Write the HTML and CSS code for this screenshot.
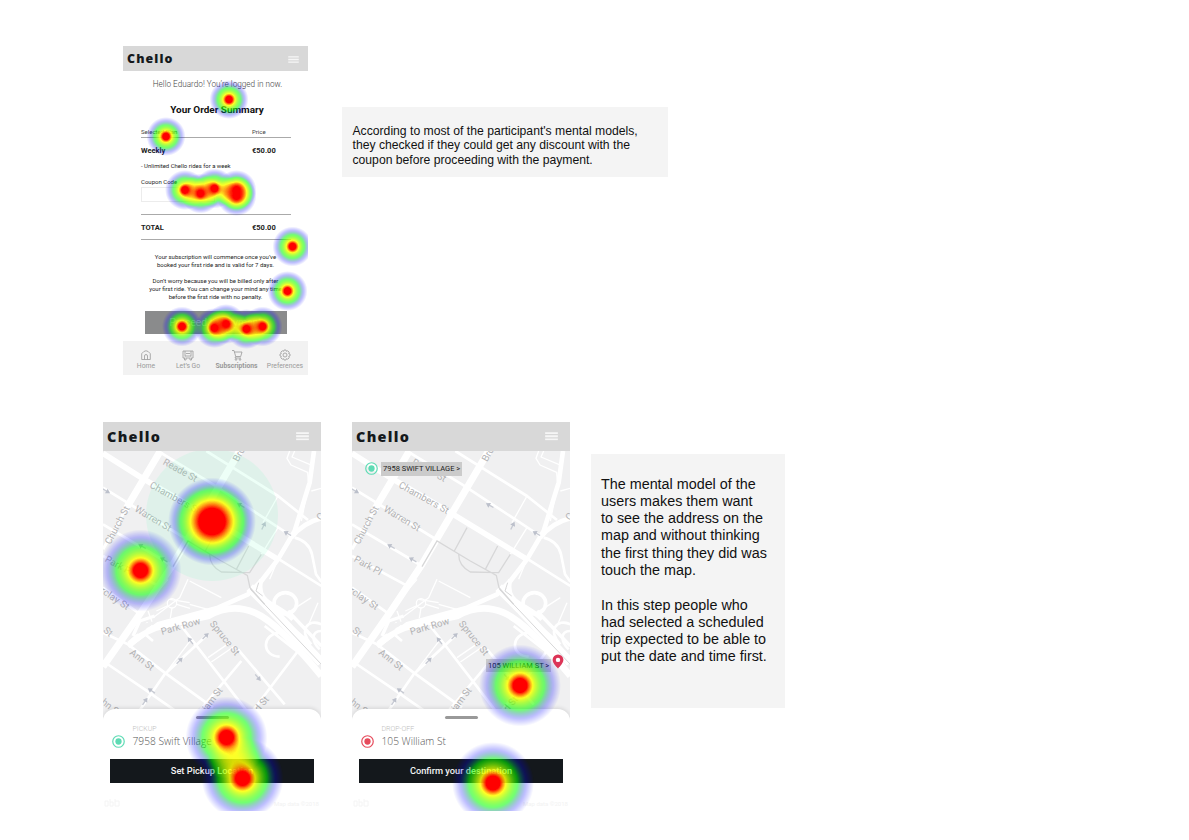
FILE: index.html
```html
<!DOCTYPE html>
<html lang="en">
<head>
<meta charset="utf-8">
<title>Chello heatmaps</title>
<link rel="stylesheet" href="styles.css">
</head>
<body>
<svg class="defs" width="0" height="0" aria-hidden="true">
  <defs>
    <!-- intensity (alpha) to colour ramp: blue, green, yellow, red -->
    <filter id="heat" x="0" y="0" width="1200" height="900" filterUnits="userSpaceOnUse" color-interpolation-filters="sRGB">
      <feColorMatrix in="SourceGraphic" type="matrix" values="0 0 0 1 0  0 0 0 1 0  0 0 0 1 0  0 0 0 0 1" result="level"/>
      <feComponentTransfer in="level" result="ramp">
        <feFuncR type="table" tableValues="0 0 0 0 0 0 0 0 0 0 0 0 .167 .333 .5 .667 .833 1 1 1 1"/>
        <feFuncG type="table" tableValues="0 0 0 0 0 0 .167 .333 .5 .667 .833 1 1 1 1 1 1 1 .667 .333 0"/>
        <feFuncB type="table" tableValues="1 1 1 1 1 1 .833 .667 .5 .333 .167 0 0 0 0 0 0 0 0 0 0"/>
      </feComponentTransfer>
      <feComposite in="ramp" in2="SourceGraphic" operator="in"/>
    </filter>
    <radialGradient id="spot"><stop offset=".17" stop-color="#000"/><stop offset=".6" stop-color="#000" stop-opacity="0.54"/><stop offset="1" stop-color="#000" stop-opacity="0"/></radialGradient>
    <radialGradient id="spotWide"><stop offset=".3" stop-color="#000"/><stop offset=".5" stop-color="#000" stop-opacity=".84"/><stop offset=".72" stop-color="#000" stop-opacity=".54"/><stop offset="1" stop-color="#000" stop-opacity="0"/></radialGradient>

    <symbol id="arrow" viewBox="-15 -9 30 18" overflow="visible">
      <path d="M-13 0H6" stroke="#c6c9d2" stroke-width="4" fill="none"/><path d="M0-8 13 0 0 8z" fill="#bcc0cb"/>
    </symbol>
    <symbol id="burger" viewBox="0 0 12 8">
      <path d="M0 1h12M0 4h12M0 7h12" stroke="#f6f6f6" stroke-width="1.7"/>
    </symbol>

    <symbol id="map" viewBox="15 105 654 800">
      <rect x="15" y="105" width="654" height="800" fill="#f0f0f1"/>
      <g fill="none" stroke="#fff" stroke-linejoin="round">
        <g stroke-width="4">
          <path d="M575 105l-8 22 12 20 50 22 2 25M590 105l-8 18 60 25M640 225l30-8M625 240l-15 75"/>
          <path d="M540 240l-45 80M490 415l50-80M330 725l70-48M340 738l70-48M150 560l60-70M270 490l-25 55-80 60M215 550l60 10M275 495l95 50M365 590l-90-25"/>
          <circle cx="222" cy="562" r="14"/><path d="M175 585l35-16M236 565l40 12M222 576l-5 30M150 585l12 32"/>
          <path d="M200 775l80-105M540 430l-25 60M640 545l-70 45M660 560l-30 70"/>
        </g>
        <g stroke-width="8">
          <path d="M325 105L540 240 630 312M590 365q42 10 52 50l12 60 16 22M540 428l130 82"/>
          <path d="M180 105L345 205 580 360M15 215L270 372M15 325L225 450M15 420L185 512"/>
          <path d="M15 515L120 590M15 735L140 820 240 890M250 630L450 890M430 735L300 890M600 705L460 890M420 700l140 165M150 620l-20 25 35 30"/>
          <path d="M330 655L200 775 120 890"/>
          <path d="M15 650l75 35 110 85 145 105"/>
          <path d="M670 625c-40-20-70 20-30 60M670 645c-30 0-30 30-5 55M545 650c-55 5-55 70 0 72M500 630l90 70 80 70M540 600l90 75"/>
        </g>
        <g stroke-width="14">
          <path d="M648 105L635 200 590 345 540 430 490 495 450 535 360 575 180 625 90 690"/>
          <path d="M580 365q35-45 90-58"/>
          <path d="M490 490q-15 50 30 75t65 45"/>
          <ellipse cx="562" cy="562" rx="34" ry="32" stroke-width="11"/>
          <path stroke-width="17" d="M15 112L130 185 310 290 540 430"/>
        </g>
        <path stroke-width="21" d="M187 105L80 285M425 105L310 300 225 445 125 595 15 752"/>
        <path stroke-width="9" d="M80 285L15 400"/>
        <path stroke-width="20" d="M95 685Q140 640 200 628L330 600Q400 560 470 590T670 780"/>
        <path stroke-width="28" d="M455 515L520 580 670 740"/>
        <path stroke-width="10" d="M570 585L670 690M105 660l20-45 45-15M165 630l-50 45"/>
      </g>
      <g fill="none" stroke="#d7d7d8" stroke-width="4">
        <path d="M225 452L270 375 370 435 448 478 456 515 500 565M360 335L322 405M490 415L455 470 370 468Q335 450 335 415M452 390L415 460"/>
        <path d="M457 520L670 745M482 500l-8 25 20 15" stroke-width="3"/>
      </g>
      <path d="M118 655l14-30 30-8-20 24z" fill="#f0f0f1"/>
      <g>
        <use href="#arrow" width="30" height="18" x="-15" y="-9" transform="translate(25 225) rotate(30)"/>
        <use href="#arrow" width="30" height="18" x="-15" y="-9" transform="translate(428 268) rotate(210)"/>
        <use href="#arrow" width="30" height="18" x="-15" y="-9" transform="translate(568 352) rotate(210)"/>
        <use href="#arrow" width="30" height="18" x="-15" y="-9" transform="translate(497 329) rotate(-64)"/>
        <use href="#arrow" width="30" height="18" x="-15" y="-9" transform="translate(132 391) rotate(210)"/>
        <use href="#arrow" width="30" height="18" x="-15" y="-9" transform="translate(197 431) rotate(210)"/>
        <use href="#arrow" width="30" height="18" x="-15" y="-9" transform="translate(277 674) rotate(232)"/>
        <use href="#arrow" width="30" height="18" x="-15" y="-9" transform="translate(323 660) rotate(-45)"/>
        <use href="#arrow" width="30" height="18" x="-15" y="-9" transform="translate(245 734) rotate(-45)"/>
        <use href="#arrow" width="30" height="18" x="-15" y="-9" transform="translate(160 824) rotate(214)"/>
        <use href="#arrow" width="30" height="18" x="-15" y="-9" transform="translate(141 856) rotate(-55)"/>
        <use href="#arrow" width="30" height="18" x="-15" y="-9" transform="translate(480 785) rotate(50)"/>
      </g>
      <g class="street">
        <text transform="translate(193 144) rotate(29)" textLength="112">Reade St</text>
        <text transform="translate(420 139) rotate(-60)">Broadway</text>
        <text transform="translate(153 213) rotate(29)" textLength="167">Chambers St</text>
        <text transform="translate(108 284) rotate(31)" textLength="122">Warren St</text>
        <text transform="translate(37 387) rotate(-62)" textLength="125">Church St</text>
        <text transform="translate(19 435) rotate(29)" textLength="90">Park Pl</text>
        <text transform="translate(5 528) rotate(34)" textLength="98">rclay St</text>
        <text transform="translate(192 657) rotate(-16)" textLength="122">Park Row</text>
        <text transform="translate(334 624) rotate(51)" textLength="124">Spruce St</text>
        <text transform="translate(93 713) rotate(38)" textLength="84">Ann St</text>
        <text transform="translate(14 646) rotate(40)">St</text>
        <text transform="translate(8 862) rotate(38)">hn St</text>
        <text transform="translate(327 887) rotate(-53)" textLength="80">iam St</text>
        <text transform="translate(482 889) rotate(-50)">d St</text>
        <text transform="translate(668 315) rotate(-50)">Centre</text>
      </g>
    </symbol>
  </defs>
</svg>

<main class="board">
  <section class="row row-top">
    <article class="phone phone-summary">
      <header class="bar"><span class="logo">Chello</span><svg class="burger"><use href="#burger"/></svg></header>
      <p class="hello">Hello Eduardo! You’re logged in now.</p>
      <h1 class="title">Your Order Summary</h1>
      <div class="order">
        <div class="line head"><span>Selected Plan</span><span class="price">Price</span></div>
        <div class="line strong"><span>Weekly</span><span class="price">€50.00</span></div>
        <p class="detail">- Unlimited Chello rides for a week</p>
        <p class="coupon">Coupon Code</p>
        <div class="field"></div>
        <div class="line strong total"><span>TOTAL</span><span class="price">€50.00</span></div>
      </div>
      <p class="terms">Your subscription will commence once you’ve<br>booked your first ride and is valid for 7 days.</p>
      <p class="terms terms-next">Don’t worry because you will be billed only after<br>your first ride. You can change your mind any time<br>before the first ride with no penalty.</p>
      <div class="proceed">Proceed to Payment</div>
      <nav class="tabs">
        <span class="tab"><svg viewBox="0 0 12 12"><path d="M1.700 10.500V4.700Q6-1.200 10.300 4.700v5.800zM4.500 10.500V7a1.500 1.500 0 0 1 3 0v3.500"/></svg>Home</span>
        <span class="tab"><svg viewBox="0 0 12 12"><path d="M1 2h10v7H9.500v2H8V9H4v2H2.500V9H1zM3 2v5h6V2M2.500 8h1M8.500 8h1M4 4.500h4"/></svg>Let’s Go</span>
        <span class="tab on"><svg viewBox="0 0 12 12"><path d="M1 1.500h2l1.700 6h5l1.300-4.500H3.500M4.700 7.500l-.7 1.500h6"/><circle cx="5" cy="10.500" r=".8"/><circle cx="9" cy="10.500" r=".8"/></svg>Subscriptions</span>
        <span class="tab"><svg viewBox="0 0 12 12"><path d="M5 1h2l.4 1.300 1.400-.5 1.400 1.400-.5 1.400L11 5v2l-1.300.4.5 1.400-1.400 1.400-1.400-.5L7 11H5l-.4-1.300-1.400.5-1.400-1.400.5-1.400L1 7V5l1.300-.4-.5-1.400 1.400-1.400 1.400.5z"/><circle cx="6" cy="6" r="2"/></svg>Preferences</span>
      </nav>
      <svg class="heat" viewBox="123 46 185 330">
        <g filter="url(#heat)" fill="url(#spot)">
          <circle cx="229" cy="99.500" r="19.500"/><circle cx="166" cy="136.500" r="19.500"/>
          <circle cx="185" cy="190" r="20"/><circle cx="200.500" cy="193.500" r="20"/><circle cx="214.500" cy="188.500" r="20"/><circle cx="236.500" cy="190" r="20"/><circle cx="236.500" cy="196" r="20"/>
          <circle cx="292.500" cy="246.500" r="20"/><circle cx="287.500" cy="291" r="20"/>
          <circle cx="182" cy="326.500" r="20"/><circle cx="214.500" cy="328" r="20"/><circle cx="226" cy="324" r="20"/><circle cx="246.500" cy="329" r="20"/><circle cx="262.500" cy="326.500" r="20"/>
        </g>
      </svg>
    </article>
    <aside class="note note-wide">According to most of the participant's mental models,<br>they checked if they could get any discount with the<br>coupon before proceeding with the payment.</aside>
  </section>

  <section class="row row-bottom">
    <article class="phone phone-map">
      <header class="bar"><span class="logo">Chello</span><svg class="burger"><use href="#burger"/></svg></header>
      <div class="view">
        <svg class="streets"><use href="#map"/></svg>
        <svg class="range" viewBox="0 0 132 132"><circle cx="66" cy="66" r="66"/></svg>
      </div>
      <div class="sheet">
        <i class="grip"></i>
        <div class="place">
          <svg class="dot dot-green" viewBox="0 0 12 12"><circle class="ring" cx="6" cy="6" r="5.300"/><circle class="core" cx="6" cy="6" r="2.900"/></svg>
          <div><p class="kind">PICKUP</p><p class="address">7958 Swift Village</p></div>
        </div>
        <div class="action">Set Pickup Location</div>
        <footer class="credit"><svg viewBox="0 0 16 10"><path d="M1 3h3v5H1zM6 1v7h3V4H6M11 1v7h4V3h-4"/></svg><span>Map data ©2018</span></footer>
      </div>
      <svg class="heat" viewBox="103 421.500 218 389.500">
        <g filter="url(#heat)" fill="url(#spot)">
          <circle cx="212" cy="521" r="44" fill="url(#spotWide)"/>
          <circle cx="140.500" cy="570" r="41"/>
          <circle cx="226.500" cy="737" r="41"/><circle cx="242.500" cy="778" r="41"/>
        </g>
      </svg>
    </article>

    <article class="phone phone-map">
      <header class="bar"><span class="logo">Chello</span><svg class="burger"><use href="#burger"/></svg></header>
      <div class="view">
        <svg class="streets"><use href="#map"/></svg>
        <div class="pin-from">
          <svg class="dot dot-green" viewBox="0 0 12 12"><circle class="ring" cx="6" cy="6" r="5.300"/><circle class="core" cx="6" cy="6" r="2.900"/></svg>
          <span class="tag">7958 SWIFT VILLAGE &gt;</span>
        </div>
        <div class="pin-to">
          <span class="tag">105 WILLIAM ST &gt;</span>
          <svg class="marker" viewBox="0 0 12 15"><path fill-rule="evenodd" d="M6 .5a5.400 5.400 0 0 0-5.400 5.300C.6 9.500 6 14.500 6 14.500s5.400-5 5.400-8.700A5.400 5.400 0 0 0 6 .5zm0 3.200a2.200 2.200 0 1 1 0 4.400 2.200 2.200 0 0 1 0-4.400z"/></svg>
        </div>
      </div>
      <div class="sheet">
        <i class="grip"></i>
        <div class="place">
          <svg class="dot dot-red" viewBox="0 0 12 12"><circle class="ring" cx="6" cy="6" r="5.300"/><circle class="core" cx="6" cy="6" r="2.900"/></svg>
          <div><p class="kind">DROP-OFF</p><p class="address">105 William St</p></div>
        </div>
        <div class="action">Confirm your destination</div>
        <footer class="credit"><svg viewBox="0 0 16 10"><path d="M1 3h3v5H1zM6 1v7h3V4H6M11 1v7h4V3h-4"/></svg><span>Map data ©2018</span></footer>
      </div>
      <svg class="heat" viewBox="352 421.500 218 389.500">
        <g filter="url(#heat)" fill="url(#spot)">
          <circle cx="520" cy="685" r="41"/><circle cx="493" cy="782.500" r="41"/>
        </g>
      </svg>
    </article>

    <aside class="note note-tall"><p>The mental model of the<br>users makes them want<br>to see the address on the<br>map and without thinking<br>the first thing they did was<br>touch the map.</p><p>In this step people who<br>had selected a scheduled<br>trip expected to be able to<br>put the date and time first.</p></aside>
  </section>
</main>
</body>
</html>
```

FILE: styles.css
```css
* { box-sizing: border-box; margin: 0; padding: 0; }
body { background: #fff; font-family: Roboto, "Liberation Sans", sans-serif; overflow: hidden; }
.defs { position: absolute; }
.board { width: 1189px; height: 840px; }
.row { display: flex; align-items: flex-start; }
.row-top { padding: 46px 0 0 123px; height: 421.5px; }
.row-bottom { padding-left: 103px; }

.phone { position: relative; overflow: hidden; background: #fff; flex: none; }
.phone-summary { width: 185px; height: 330px; margin-right: 34px; }
.phone-map { width: 218px; height: 389.5px; margin-right: 31px; display: flex; flex-direction: column; }
.heat { position: absolute; inset: 0; width: 100%; height: 100%; }

.bar { display: flex; align-items: center; justify-content: space-between; background: #d8d8d8; height: 25px; padding: 1px 9px 0 4px; }
.logo { font: 800 12.4px/1 "Open Sans", sans-serif; letter-spacing: 1.1px; color: #14181c; padding-top: 1px; }
.burger { width: 11px; height: 7px; }
.phone-map .bar { height: 29.5px; padding: 0 12px 0 4px; flex: none; }
.phone-map .logo { font-size: 14.4px; letter-spacing: 1.3px; }
.phone-map .burger { width: 13px; height: 8.5px; }

.hello { height: 26px; line-height: 26px; text-align: center; font-size: 8.2px; font-weight: 300; color: #444; padding-left: 4px; white-space: nowrap; }
.title { height: 25px; line-height: 25px; text-align: center; font-size: 9.95px; font-weight: 700; color: #111; padding-left: 3px; }
.order { width: 150px; margin-left: 18px; color: #222; }
.line { display: flex; justify-content: space-between; align-items: center; height: 24px; }
.price { width: 39px; }
.head { height: 11px; margin-top: 5px; font-size: 6px; border-bottom: 1px solid #aaa; color: #444; line-height: 9px; padding-bottom: 1px; }
.strong { font-size: 7.5px; font-weight: 700; }
.detail, .coupon { font-size: 5.95px; line-height: 8px; height: 8px; white-space: nowrap; }
.coupon { margin-top: 7px; height: 9px; line-height: 9px; font-size: 6px; }
.field { width: 74px; height: 15px; margin: 1px 0 12px; border: 1px solid #ececec; }
.total { height: 26px; border: solid #aaa; border-width: 1px 0; }
.terms { margin-top: 13.3px; font-size: 6px; line-height: 7.9px; text-align: center; color: #222; white-space: nowrap; }
.terms-next { margin-top: 7.8px; }
.proceed { margin: 10px 0 0 21.5px; width: 142px; height: 23.5px; line-height: 24px; text-align: center; background: #8a8b8c; color: #d0d0d0; font-size: 10.4px; font-weight: 300; }
.tabs { display: flex; margin-top: 6.7px; height: 34.5px; background: #f2f2f2; color: #999; font-size: 6.8px; padding: 8px 1px 0 2px; }
.tab { display: flex; flex-direction: column; align-items: center; width: 42px; line-height: 10px; }
.tab svg { width: 12px; height: 12px; fill: none; stroke: #999; stroke-width: .8; }
.tab.on { width: 55px; font-weight: 700; }

.view { position: relative; height: 257.5px; flex: none; }
.streets { display: block; width: 218px; height: 266.67px; }
.street { font: 29px Roboto, sans-serif; fill: #b2b2b4; }
.range { position: absolute; left: 43px; top: -2px; width: 132px; height: 132px; fill: #6fffc0; fill-opacity: .12; clip-path: inset(2px 0 0 0); }
.dot { width: 13px; height: 13px; flex: none; }
.ring { fill: none; stroke-width: 1.1; }
.dot-green { stroke: #5edbb4; fill: #5edbb4; }
.dot-red { stroke: #e64a5b; fill: #e64a5b; }
.core { stroke: none; }
.pin-from { position: absolute; left: 13px; top: 11px; display: flex; align-items: center; gap: 3px; }
.pin-to { position: absolute; left: 134px; top: 203px; display: flex; align-items: flex-end; }
.tag { display: block; height: 13.5px; line-height: 14px; padding: 0 2px; background: #cbcbcb; color: #222; font-size: 7.5px; white-space: nowrap; }
.marker { width: 12px; height: 15px; margin: 0 0 3px 1px; fill: #dc3557; }

.sheet { position: relative; flex: 1; background: #fff; border-radius: 12px 12px 0 0; box-shadow: 0 -1px 4px rgba(0,0,0,.12); padding: 7px 7px 0; display: flex; flex-direction: column; }
.grip { width: 33px; height: 3.5px; border-radius: 2px; background: #999; margin: 0 auto; }
.place { display: flex; align-items: flex-end; gap: 8px; margin: 5px 0 0 1.5px; height: 24px; }
.place .dot { margin-bottom: .5px; }
.kind { font-size: 7px; line-height: 9px; color: #c0c0c0; font-weight: 300; }
.address { font: 300 10.2px/14px "Open Sans", sans-serif; color: #555; }
.action { margin-top: 11.2px; height: 24px; line-height: 24px; background: #14181c; color: #f4f4f4; font-size: 9.25px; font-weight: 500; text-align: center; flex: none; }
.credit { display: flex; justify-content: space-between; align-items: center; margin: 14px -5px 0 -6px; height: 12px; font-size: 6px; color: #f2f2f2; }
.credit svg { width: 16px; height: 10px; fill: none; stroke: #f4f4f4; }

.note { background: #f4f4f4; color: #111; font-family: "Liberation Sans", Arial, sans-serif; white-space: nowrap; flex: none; }
.note-wide { width: 326px; height: 70.5px; margin-top: 60.5px; padding: 17px 0 0 10.5px; font-size: 12.18px; line-height: 14.6px; }
.note-tall { width: 194px; height: 254px; margin: 32px 0 0 -10px; padding: 22px 0 0 10px; font-size: 14.35px; line-height: 17.3px; }
.note-tall p + p { margin-top: 17.3px; }
```
